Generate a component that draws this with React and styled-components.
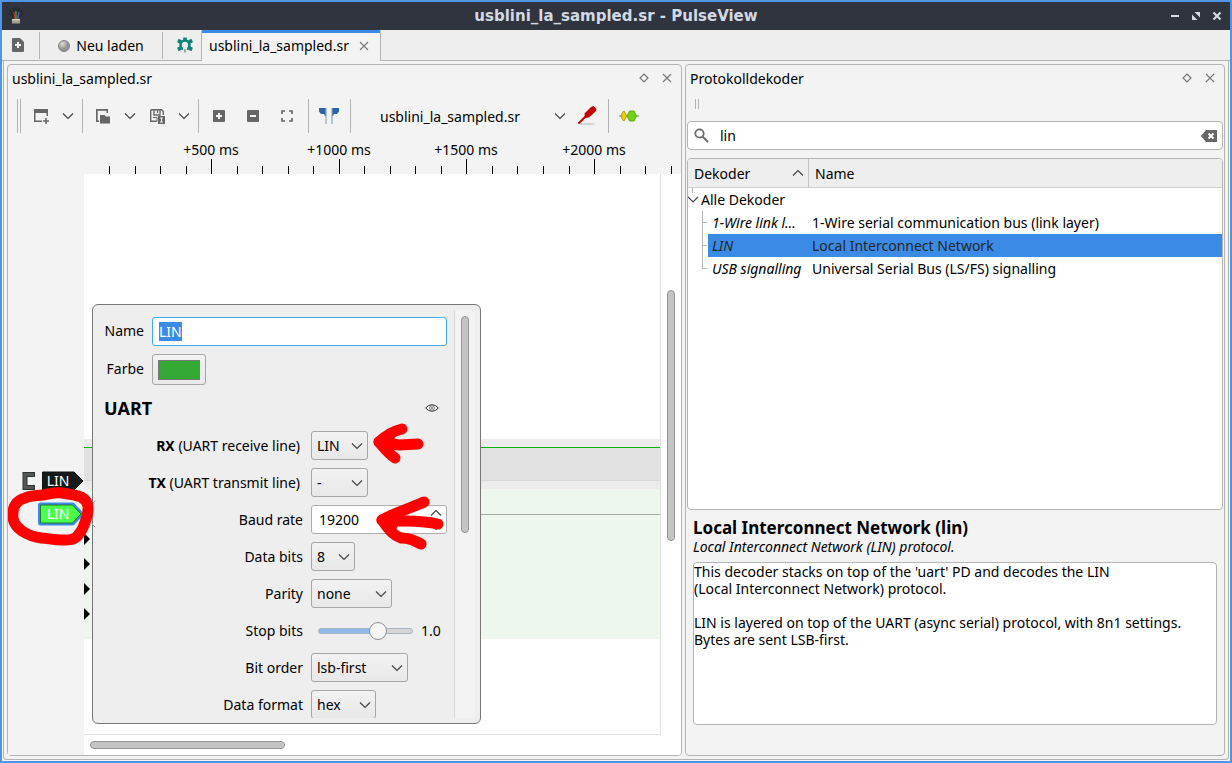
import { useEffect, useRef, useState } from "react";
import styled, { createGlobalStyle, css } from "styled-components";

const GlobalStyle = createGlobalStyle`
  * {
    box-sizing: border-box;
  }
  body {
    margin: 0;
    color: #000;
    font-family: "Noto Sans", "Open Sans", sans-serif;
    font-size: 14px;
    line-height: 17px;
  }
  button, input, select, textarea {
    margin: 0;
    font: inherit;
    color: inherit;
  }
  svg {
    display: block;
    flex: none;
  }
`;

const Window = styled.div`
  min-height: 100vh;
  display: flex;
  flex-direction: column;
  border: 2px solid #5094e4;
  background: #f3f3f3;
`;

const TitleBar = styled.header`
  height: 28px;
  display: grid;
  grid-template-columns: 90px 1fr 90px;
  align-items: center;
  background: #2f343f;
  color: #d3dae3;
`;

const WindowTitle = styled.h1`
  margin: 0;
  font-family: "DejaVu Sans", sans-serif;
  font-size: 15px;
  font-weight: bold;
  text-align: center;
`;

const WindowIcon = styled.div`
  padding-left: 6px;
`;

const WindowButtons = styled.div`
  display: flex;
  justify-content: flex-end;
  gap: 7px;
  padding-right: 6px;
`;

const IconButton = styled.button`
  width: ${(props) => props.$size || 14}px;
  height: ${(props) => props.$size || 14}px;
  padding: 0;
  display: flex;
  align-items: center;
  justify-content: center;
  border: 0;
  background: none;
`;

const TabBar = styled.div`
  height: 31px;
  display: flex;
  background: #eee;
  border-bottom: 1px solid #b4b4b4;
`;

const TabBarCell = styled.div`
  width: ${(props) => props.$width}px;
  height: 27px;
  margin-top: 2px;
  padding: ${(props) => props.$padding || 0};
  display: flex;
  align-items: center;
  justify-content: center;
  border-right: ${(props) => (props.$last ? "0" : "1px solid #b4b4b4")};
`;

const ReloadButton = styled.button`
  display: flex;
  align-items: center;
  gap: 6px;
  padding: 0;
  border: 0;
  background: none;
`;

const Tab = styled.div`
  height: 31px;
  display: flex;
  align-items: center;
  gap: 10px;
  padding: 0 11px 3px 7px;
  border: 1px solid #b4b4b4;
  border-top: 3px solid #3b8be6;
  border-bottom: 0;
  border-radius: 2px 2px 0 0;
  background: #f3f3f3;
`;

const Frame = styled.main`
  flex: 1;
  display: grid;
  grid-template-columns: minmax(0, 5fr) minmax(0, 4fr);
  gap: 3px;
  margin: 0 1px 1px;
  padding: 3px;
  border: 1px solid #b4b4b4;
  border-top: 0;
  border-radius: 0 0 4px 4px;
`;

const Dock = styled.section`
  display: flex;
  flex-direction: column;
  min-width: 0;
  border: 1px solid #b4b4b4;
  border-radius: 4px;
`;

const DockHeader = styled.div`
  height: 26px;
  display: flex;
  align-items: center;
  gap: 9px;
  padding: 0 7px 0 4px;
`;

const DockTitle = styled.h2`
  flex: 1;
  margin: 0;
  font-size: 14px;
  font-weight: normal;
`;

const Toolbar = styled.div`
  height: 34px;
  margin: 8px 0 7px;
  padding-left: 9px;
  display: flex;
  align-items: center;
`;

const Handle = styled.div`
  width: 4px;
  height: ${(props) => props.$height}px;
  border: 1px solid #b4b4b4;
  border-width: 0 1px;
`;

const ToolGroup = styled.div`
  height: 34px;
  display: flex;
  align-items: center;
  gap: ${(props) => props.$gap || 0}px;
  padding: ${(props) => props.$padding};
  border-right: ${(props) => (props.$last ? "0" : "1px solid #b4b4b4")};
`;

const ToolButton = styled.button`
  width: ${(props) => (props.$menu ? 14 : 20)}px;
  height: 24px;
  padding: 0;
  display: flex;
  align-items: center;
  justify-content: center;
  border: 0;
  background: none;
`;

const DeviceSelect = styled.div`
  width: 190px;
  display: grid;
  align-items: center;

  & > * {
    grid-area: 1 / 1;
  }
  & > svg {
    justify-self: end;
    pointer-events: none;
  }
  select {
    appearance: none;
    width: 100%;
    padding: 0 3px;
    border: 0;
    background: none;
  }
`;

const Ruler = styled.svg`
  width: 100%;
  height: 34px;
  overflow: hidden;
`;

const View = styled.div`
  position: relative;
  flex: 1;
  min-height: 560px;
  display: grid;
  grid-template-columns: 76px minmax(0, 1fr) 20px;
  grid-template-rows: minmax(0, 1fr) 20px;
  border-radius: 0 0 3px 3px;
  background: #fff;
`;

const SignalHeader = styled.div`
  grid-row: 1 / 3;
  padding-top: 295px;
  display: flex;
  flex-direction: column;
  align-items: flex-end;
  gap: 9px;
  background: #f3f3f3;
`;

const SignalRow = styled.div`
  display: flex;
  align-items: center;
  gap: 6px;
`;

const Canvas = styled.div`
  padding-top: 265px;
  border-right: 1px solid #e0e0e0;
  border-bottom: 1px solid #e0e0e0;
`;

const LogicTrack = styled.div`
  height: 50px;
  padding: 8px 0;
  background: #ececec;

  & > div {
    height: 34px;
    border-top: 1px solid #0ab40a;
    border-bottom: 1px solid #d8d8d8;
    background: #e1e1e1;
  }
`;

const DecodeTrack = styled.div`
  height: 150px;
  padding-top: 25px;
  background: #edf7ee;

  & > div {
    border-top: 1px solid #a4aca5;
    padding-top: 18px;
    display: flex;
    flex-direction: column;
    gap: 13px;
  }
`;

const VerticalBar = styled.div`
  grid-column: 3;
  grid-row: 1;
  padding: 116px 6px 0;
`;

const HorizontalBar = styled.div`
  grid-column: 2;
  grid-row: 2;
  padding: 6px;
`;

const Thumb = styled.div`
  width: ${(props) => props.$width}px;
  height: ${(props) => props.$height}px;
  border: 1px solid #969696;
  border-radius: 4px;
  background: #c4c4c4;
`;

const Popup = styled.form`
  position: absolute;
  top: 130px;
  left: 84px;
  width: 389px;
  max-height: 420px;
  padding: 5px 5px 5px 11px;
  display: flex;
  gap: 7px;
  border: 1px solid #777;
  border-radius: 6px;
  background: #eee;
`;

const PopupContent = styled.div`
  flex: 1;
  min-width: 0;
  padding-top: 7px;
  overflow: hidden;
`;

const PopupScroll = styled.div`
  width: 21px;
  padding: 6px;
  border-left: 1px solid #d9d9d9;
  background: #f3f3f3;
`;

const BasicRow = styled.div`
  display: grid;
  grid-template-columns: 40px minmax(0, 1fr);
  column-gap: 8px;
  align-items: center;
  margin-bottom: 8px;

  label {
    padding-bottom: 2px;
    text-align: right;
  }
`;

const fieldBox = css`
  height: 29px;
  border: 1px solid #adadad;
  border-radius: 3px;
`;

const NameInput = styled.input`
  ${fieldBox}
  width: 100%;
  padding: 0 6px;
  border-color: #3daee9;
  background: #fff;
  outline: 0;

  &::selection {
    background: #3b8be6;
    color: #fff;
  }
`;

const ColorButton = styled.button`
  width: 54px;
  height: 31px;
  padding: 5px;
  border: 1px solid #a6a6a6;
  border-radius: 3px;
  background: linear-gradient(#f2f2f2, #e8e8e8);

  span {
    display: block;
    height: 20px;
    border: 1px solid #777;
    background: #33a933;
  }
`;

const DecoderHeading = styled.div`
  height: 30px;
  margin-bottom: 8px;
  padding-right: 8px;
  display: flex;
  align-items: center;
  justify-content: space-between;

  h3 {
    margin: 0;
    font-size: 18px;
  }
`;

const OptionRow = styled.div`
  height: 29px;
  margin-bottom: 8px;
  display: grid;
  grid-template-columns: ${(props) => (props.$channel ? 196 : 199)}px minmax(0, 1fr);
  column-gap: ${(props) => (props.$channel ? 11 : 8)}px;
  align-items: center;

  & > label {
    text-align: right;
  }
`;

const SelectBox = styled.div`
  width: ${(props) => props.$width}px;
  display: grid;
  align-items: center;

  & > * {
    grid-area: 1 / 1;
  }
  & > svg {
    justify-self: end;
    margin-right: 4px;
    pointer-events: none;
  }
  select {
    ${fieldBox}
    appearance: none;
    width: 100%;
    padding: 0 5px;
    background: linear-gradient(#f2f2f2, #e8e8e8);
    border-color: #a6a6a6;
  }
`;

const SpinBox = styled.div`
  ${fieldBox}
  display: flex;
  background: #fff;

  input {
    flex: 1;
    min-width: 0;
    padding: 0 7px;
    border: 0;
    background: none;
    outline: 0;
  }
`;

const SpinButtons = styled.div`
  display: grid;
  grid-template-rows: 14px 13px;
`;

const SpinButton = styled.button`
  width: 20px;
  padding: 0;
  display: grid;
  place-items: center;
  border: 0;
  background: none;
`;

const SliderBox = styled.div`
  display: flex;
  align-items: center;
  gap: 8px;
  padding-left: 7px;

  input {
    appearance: none;
    width: 95px;
    height: 18px;
    background: none;
  }
  input::-webkit-slider-runnable-track {
    height: 6px;
    border: 1px solid #a9b4c2;
    border-radius: 3px;
    background: linear-gradient(
      to right,
      #8fbaea ${(props) => props.$percent}%,
      #d6d6d6 ${(props) => props.$percent}%
    );
  }
  input::-webkit-slider-thumb {
    appearance: none;
    width: 18px;
    height: 18px;
    margin-top: -7px;
    border: 1px solid #8f8f8f;
    border-radius: 9px;
    background: #f6f6f6;
  }
`;

const Annotation = styled.svg`
  position: absolute;
  top: ${(props) => props.$top}px;
  left: ${(props) => props.$left}px;
  pointer-events: none;
  fill: none;
  stroke: #f00;
  stroke-linecap: round;
  stroke-linejoin: round;
`;

const SmallHandleRow = styled.div`
  padding: 8px 0 12px 9px;
`;

const SearchField = styled.label`
  height: 29px;
  margin: 0 1px 8px;
  padding: 0 5px 0 6px;
  display: flex;
  align-items: center;
  border: 1px solid #b4b4b4;
  border-radius: 4px;
  background: #fff;

  input {
    flex: 1;
    min-width: 0;
    padding: 0 11px;
    border: 0;
    background: none;
    outline: 0;
  }
`;

const TreePane = styled.div`
  flex: 1;
  min-height: 120px;
  margin: 0 1px;
  border: 1px solid #b4b4b4;
  border-radius: 4px;
  background: #fff;
  overflow: hidden;
`;

const Tree = styled.table`
  width: 100%;
  table-layout: fixed;
  border-collapse: separate;
  border-spacing: 0;

  th {
    height: 29px;
    padding: 0 6px;
    text-align: left;
    font-weight: normal;
    background: #eee;
    border-bottom: 1px solid #cfcfcf;
  }
  th:first-child {
    width: 121px;
    padding-right: 3px;
    border-right: 1px solid #c4c4c4;
  }
  th > div {
    display: flex;
    align-items: center;
    justify-content: space-between;
  }
  td {
    height: 23px;
    padding: 0;
  }
`;

const RootCell = styled.div`
  display: flex;
  align-items: center;
`;

const NameCell = styled.div`
  height: 23px;
  padding: 3px;
  white-space: nowrap;
  color: ${(props) => (props.$selected ? "#232629" : "inherit")};
  background: ${(props) => (props.$selected ? "#3b8be6" : "none")};
`;

const DecoderCell = styled.div`
  display: flex;

  span {
    flex: 1;
    height: 23px;
    padding: 3px 4px;
    overflow: hidden;
    white-space: nowrap;
    text-overflow: ellipsis;
    font-style: italic;
    color: ${(props) => (props.$selected ? "#232629" : "inherit")};
    background: ${(props) => (props.$selected ? "#3b8be6" : "none")};
  }
`;

const Details = styled.div`
  padding: 8px 7px 30px;

  h3 {
    margin: 0;
    font-size: 17px;
    line-height: 20px;
  }
  p {
    margin: 0 0 7px;
    font-style: italic;
  }
  textarea {
    display: block;
    width: 100%;
    height: 163px;
    padding: 0;
    border: 1px solid #b4b4b4;
    border-radius: 4px;
    background: #fff;
    line-height: 17px;
    resize: none;
    outline: 0;
  }
`;

const decoders = [
  { id: "1-Wire link l…", name: "1-Wire serial communication bus (link layer)" },
  { id: "LIN", name: "Local Interconnect Network" },
  { id: "USB signalling", name: "Universal Serial Bus (LS/FS) signalling" },
];

const description = `This decoder stacks on top of the 'uart' PD and decodes the LIN
(Local Interconnect Network) protocol.

LIN is layered on top of the UART (async serial) protocol, with 8n1 settings.
Bytes are sent LSB-first.`;

function Chevron({ up }) {
  return (
    <svg width="14" height="14" viewBox="0 0 14 14" fill="none" stroke="#444" strokeWidth="1.2">
      <path d={up ? "M2 9.5 7 4.5 12 9.5" : "M2 4.5 7 9.5 12 4.5"} />
    </svg>
  );
}

function CloseIcon() {
  return (
    <svg width="10" height="10" viewBox="0 0 10 10" fill="none" stroke="#777" strokeWidth="1.1">
      <path d="M1 1 9 9M9 1 1 9" />
    </svg>
  );
}

function FloatIcon() {
  return (
    <svg width="10" height="10" viewBox="0 0 10 10" fill="none" stroke="#777" strokeWidth="1.2">
      <path d="M5 1 9 5 5 9 1 5Z" />
    </svg>
  );
}

function AppIcon() {
  return (
    <svg width="16" height="18" viewBox="0 0 16 18" fill="none">
      <path d="M2 3 6 9M5 1 7 9M8 0V8M11 1 9 9M14 3 10 9M1 6 6 11M15 6 10 11" stroke="#1a1c20" />
      <path d="M6 5 7 13" stroke="#a33a2c" strokeWidth="1.5" />
      <path d="M8 4V13" stroke="#3a9a50" strokeWidth="1.5" />
      <path d="M11 5 9.500 13" stroke="#7d4db0" strokeWidth="1.5" />
      <path d="M4 12H12V16.500H4Z" fill="#a39f8e" />
      <path d="M4 12H12V13.500H4Z" fill="#d0ccb8" />
    </svg>
  );
}

function NewViewIcon() {
  return (
    <svg width="16" height="16" viewBox="0 0 16 16" fill="none" stroke="#666">
      <path d="M1 1H15V5H1Z" fill="#666" stroke="none" />
      <path d="M1.750 4V13.250H9M14.250 4V8" strokeWidth="1.5" />
      <path d="M13 10V16M10 13H16" strokeWidth="1.5" />
    </svg>
  );
}

function OpenIcon() {
  return (
    <svg width="16" height="16" viewBox="0 0 16 16">
      <path d="M1 1H13V5H11.500V2.700H2.700V12.500H4V14H1Z" fill="#666" />
      <path d="M5 7H9.500L11 8.500H15V15.500H5Z" fill="#666" />
    </svg>
  );
}

function SaveIcon() {
  return (
    <svg width="16" height="16" viewBox="0 0 16 16" fill="none" stroke="#666">
      <path d="M1.700 1.700H12.500L14.300 3.500V7M1.700 1.700V13.300H8" strokeWidth="1.4" />
      <path d="M5 2V7H11V2M8.500 2V5" strokeWidth="1.3" />
      <path d="M4 9.500H8V13" />
      <path d="M9 8H16V16H9Z" fill="#666" stroke="none" />
      <path d="M11 10H14M12.500 10V14M11 14H14" stroke="#f3f3f3" />
    </svg>
  );
}

function ZoomIcon({ minus }) {
  return (
    <svg width="12" height="12" viewBox="0 0 12 12">
      <rect width="12" height="12" rx="1" fill="#666" />
      <path d={minus ? "M3 6H9" : "M3 6H9M6 3V9"} stroke="#f6f6f6" strokeWidth="2" />
    </svg>
  );
}

function FitIcon() {
  return (
    <svg width="12" height="12" viewBox="0 0 12 12" fill="none" stroke="#666" strokeWidth="1.7">
      <path d="M1 4V1H4M8 1H11V4M11 8V11H8M4 11H1V8" />
    </svg>
  );
}

function FlagsIcon() {
  return (
    <svg width="20" height="18" viewBox="0 0 20 18">
      <path d="M0 1H7V9H6L5 7H2L0 4.500Z" fill="#2d64a8" />
      <path d="M20 1H13V9H14L15 7H18L20 4.500Z" fill="#2d64a8" />
      <path d="M7 1V17M13 1V17" stroke="#88a9bd" strokeWidth="1.2" />
    </svg>
  );
}

function ProbeIcon() {
  return (
    <svg width="20" height="20" viewBox="0 0 20 20">
      <ellipse cx="10" cy="18" rx="8" ry="1.300" fill="#d4d4d4" />
      <path d="M2 17 9 10" stroke="#c00" strokeWidth="2" strokeLinecap="round" />
      <path d="M7.500 7.500 14 1 16.500 0 19.500 3 18.500 5.500 12 11.500 8 12Z" fill="#c80000" />
    </svg>
  );
}

function DecoderIcon() {
  return (
    <svg width="20" height="12" viewBox="0 0 20 12">
      <path d="M0 6H20" stroke="#777" />
      <path d="M2 6 4 1.500H5.500L7.500 6 5.500 10.500H4Z" fill="#edd400" stroke="#b39b00" />
      <path d="M8 6 10.500 1H15L17.500 6 15 11H10.500Z" fill="#73d216" stroke="#5aac10" />
    </svg>
  );
}

function NewFileIcon() {
  return (
    <svg width="14" height="14" viewBox="0 0 14 14">
      <path d="M1 1Q1 0 2 0H9L13 4V13Q13 14 12 14H2Q1 14 1 13Z" fill="#666" />
      <path d="M4 7H10M7 4V10" stroke="#f6f6f6" strokeWidth="2" />
    </svg>
  );
}

function SphereIcon() {
  return (
    <svg width="12" height="12" viewBox="0 0 12 12">
      <defs>
        <radialGradient id="sphere" cx="35%" cy="30%">
          <stop offset="0" stopColor="#dcdcd6" />
          <stop offset="1" stopColor="#92928e" />
        </radialGradient>
      </defs>
      <circle cx="6" cy="6" r="5.500" fill="url(#sphere)" stroke="#858585" />
    </svg>
  );
}

function GearIcon() {
  return (
    <svg width="16" height="16" viewBox="0 0 16 16" fill="none">
      <circle cx="8" cy="8" r="4.500" stroke="#0b8577" strokeWidth="2.600" />
      <path
        d="M8 4V.5M4 5 .8 3.500M12 5 15.200 3.500M4 11 .8 12.500M12 11 15.200 12.500"
        stroke="#0b8577"
        strokeWidth="3.600"
      />
      <path d="M8 10.500V15" stroke="#eee" strokeWidth="4" />
      <path d="M8 12V15.500" stroke="#888" strokeWidth="1.500" />
    </svg>
  );
}

function EyeIcon() {
  return (
    <svg width="14" height="8" viewBox="0 0 14 8" fill="none" stroke="#333">
      <path d="M.5 4Q3.500.7 7 .7T13.500 4Q10.500 7.300 7 7.300T.5 4Z" />
      <circle cx="7" cy="4" r="2.300" stroke="#777" />
      <circle cx="7" cy="4" r=".8" fill="#333" stroke="none" />
    </svg>
  );
}

function SearchIcon() {
  return (
    <svg width="15" height="15" viewBox="0 0 15 15" fill="none" stroke="#6a6a6a">
      <circle cx="5.500" cy="5.500" r="4.200" strokeWidth="1.800" />
      <path d="M8.500 8.500 14 14" strokeWidth="2" />
    </svg>
  );
}

function ClearIcon() {
  return (
    <svg width="16" height="12" viewBox="0 0 16 12">
      <path d="M0 6 5 0H16V12H5Z" fill="#666" />
      <path d="M7.500 3.500 12.500 8.500M12.500 3.500 7.500 8.500" stroke="#fff" strokeWidth="2" />
    </svg>
  );
}

function BracketIcon() {
  return (
    <svg width="14" height="18" viewBox="0 0 14 18" fill="none">
      <path d="M13 2.500H3V15.500H13" stroke="#2e3436" strokeWidth="5" />
      <path d="M12 2.500H3V15.500H12" stroke="#555753" strokeWidth="3" />
    </svg>
  );
}

function SignalTag({ label, selected }) {
  return (
    <svg width={selected ? 46 : 42} height="24" viewBox={selected ? "0 0 46 24" : "4 0 42 24"}>
      {selected && (
        <path
          d="M2.500 3H34.500L43 12 34.500 21H2.500Z"
          stroke="#3b8be6"
          strokeWidth="5"
          strokeLinejoin="round"
        />
      )}
      <path
        d={selected ? "M2.500 3H34.500L43 12 34.500 21H2.500Z" : "M4.500 3H36L45 12 36 21H4.500Z"}
        fill={selected ? "#4bff4b" : "#16191a"}
        stroke={selected ? "#1c7a2a" : "#111"}
      />
      <text x="20" y="17" fontSize="14" fill="#fff" textAnchor="middle">
        {label}
      </text>
    </svg>
  );
}

function TimeRuler() {
  const ticks = Array.from({ length: 23 }, (_, i) => ({
    x: Math.round(101 + i * 25.53),
    major: i % 5 === 4,
    time: (i + 1) * 100,
  }));
  return (
    <Ruler>
      {ticks.map(({ x, major, time }) => (
        <g key={time}>
          <rect x={x} y={major ? 19 : 26} width="1" height={major ? 15 : 8} />
          {major && (
            <text x={x} y="15" fontSize="14" textAnchor="middle">{`+${time} ms`}</text>
          )}
        </g>
      ))}
    </Ruler>
  );
}

function Option({ id, label, channel, children }) {
  return (
    <OptionRow $channel={channel}>
      <label htmlFor={id}>
        {channel && <b>{channel} </b>}
        {label}
      </label>
      {children}
    </OptionRow>
  );
}

function Dropdown({ id, width, value }) {
  return (
    <SelectBox $width={width}>
      <select id={id} defaultValue={value}>
        <option>{value}</option>
      </select>
      <Chevron />
    </SelectBox>
  );
}

function DecoderPopup() {
  const nameRef = useRef(null);
  const [stopBits, setStopBits] = useState(1);

  useEffect(() => {
    nameRef.current.focus();
    nameRef.current.select();
  }, []);

  return (
    <Popup>
      <PopupContent>
        <BasicRow>
          <label htmlFor="name">Name</label>
          <NameInput id="name" ref={nameRef} defaultValue="LIN" />
        </BasicRow>
        <BasicRow>
          <label htmlFor="color">Farbe</label>
          <ColorButton id="color" type="button">
            <span />
          </ColorButton>
        </BasicRow>
        <DecoderHeading>
          <h3>UART</h3>
          <IconButton type="button" aria-label="Toggle visibility">
            <EyeIcon />
          </IconButton>
        </DecoderHeading>
        <Option id="rx" channel="RX" label="(UART receive line)">
          <Dropdown id="rx" width={57} value="LIN" />
        </Option>
        <Option id="tx" channel="TX" label="(UART transmit line)">
          <Dropdown id="tx" width={57} value="-" />
        </Option>
        <Option id="baud" label="Baud rate">
          <SpinBox>
            <input id="baud" type="text" inputMode="numeric" defaultValue="19200" />
            <SpinButtons>
              <SpinButton type="button" aria-label="Increase">
                <Chevron up />
              </SpinButton>
              <SpinButton type="button" aria-label="Decrease">
                <Chevron />
              </SpinButton>
            </SpinButtons>
          </SpinBox>
        </Option>
        <Option id="databits" label="Data bits">
          <Dropdown id="databits" width={44} value="8" />
        </Option>
        <Option id="parity" label="Parity">
          <Dropdown id="parity" width={81} value="none" />
        </Option>
        <Option id="stopbits" label="Stop bits">
          <SliderBox $percent={(stopBits / 1.5) * 100}>
            <input
              id="stopbits"
              type="range"
              min="0"
              max="1.5"
              step="0.5"
              value={stopBits}
              onChange={(e) => setStopBits(Number(e.target.value))}
            />
            <output htmlFor="stopbits">{stopBits.toFixed(1)}</output>
          </SliderBox>
        </Option>
        <Option id="bitorder" label="Bit order">
          <Dropdown id="bitorder" width={97} value="lsb-first" />
        </Option>
        <Option id="format" label="Data format">
          <Dropdown id="format" width={65} value="hex" />
        </Option>
      </PopupContent>
      <PopupScroll>
        <Thumb $width={8} $height={217} />
      </PopupScroll>
    </Popup>
  );
}

function SessionDock() {
  return (
    <Dock>
      <DockHeader>
        <DockTitle>usblini_la_sampled.sr</DockTitle>
        <IconButton aria-label="Float">
          <FloatIcon />
        </IconButton>
        <IconButton aria-label="Close">
          <CloseIcon />
        </IconButton>
      </DockHeader>
      <Toolbar>
        <Handle $height={34} />
        <ToolGroup $gap={10} $padding="0 7px 0 10px">
          <ToolButton aria-label="New view">
            <NewViewIcon />
          </ToolButton>
          <ToolButton $menu aria-label="New view menu">
            <Chevron />
          </ToolButton>
        </ToolGroup>
        <ToolGroup $gap={10} $padding="0 7px 0 10px">
          <ToolButton aria-label="Open">
            <OpenIcon />
          </ToolButton>
          <ToolButton $menu aria-label="Open menu">
            <Chevron />
          </ToolButton>
          <ToolButton aria-label="Save">
            <SaveIcon />
          </ToolButton>
          <ToolButton $menu aria-label="Save menu">
            <Chevron />
          </ToolButton>
        </ToolGroup>
        <ToolGroup $gap={14} $padding="0 11px 0 10px">
          <ToolButton aria-label="Zoom in">
            <ZoomIcon />
          </ToolButton>
          <ToolButton aria-label="Zoom out">
            <ZoomIcon minus />
          </ToolButton>
          <ToolButton aria-label="Zoom to fit">
            <FitIcon />
          </ToolButton>
        </ToolGroup>
        <ToolGroup $padding="0 11px 0 10px">
          <ToolButton aria-label="Show cursors">
            <FlagsIcon />
          </ToolButton>
        </ToolGroup>
        <ToolGroup $gap={10} $padding="0 11px 0 26px">
          <DeviceSelect>
            <select aria-label="Device" defaultValue="usblini_la_sampled.sr">
              <option>usblini_la_sampled.sr</option>
            </select>
            <Chevron />
          </DeviceSelect>
          <ToolButton aria-label="Configure channels">
            <ProbeIcon />
          </ToolButton>
        </ToolGroup>
        <ToolGroup $last $padding="0 0 0 10px">
          <ToolButton aria-label="Add protocol decoder">
            <DecoderIcon />
          </ToolButton>
        </ToolGroup>
      </Toolbar>
      <TimeRuler />
      <View>
        <SignalHeader>
          <SignalRow>
            <BracketIcon />
            <SignalTag label="LIN" />
          </SignalRow>
          <SignalRow>
            <SignalTag label="LIN" selected />
          </SignalRow>
        </SignalHeader>
        <Canvas>
          <LogicTrack>
            <div />
          </LogicTrack>
          <DecodeTrack>
            <div>
              {["bits", "data", "warnings", "frames"].map((row) => (
                <svg key={row} width="6" height="12" viewBox="0 0 6 12">
                  <path d="M0 0 6 6 0 12Z" />
                </svg>
              ))}
            </div>
          </DecodeTrack>
        </Canvas>
        <VerticalBar>
          <Thumb $width={8} $height={251} />
        </VerticalBar>
        <HorizontalBar>
          <Thumb $width={195} $height={8} />
        </HorizontalBar>
        <DecoderPopup />
        <Annotation $top={308} $left={0} width="92" height="72" viewBox="8 482 92 72">
          <path d="M92 504 95 501M92 524 95 527" stroke="#999" strokeWidth="1" />
          <path
            d="M25 498C31 495 37 496 43 495 50 494 55 492 62 493 69 494 76 495 81 497 89 501 89 508 87 516 85 523 83 530 79 534 75 540 70 540 62 540 53 540 47 538 41 538 34 537 28 535 22 531 15 526 12 521 13 513 13 505 18 500 25 498Z"
            strokeWidth="11"
          />
        </Annotation>
        <Annotation $top={246} $left={362} width="60" height="48" viewBox="370 420 60 48">
          <path d="M402 429C394 431 387 434 379 442 385 449 389 454 395 458" strokeWidth="11" />
          <path d="M379 442 399 445 418 444" strokeWidth="11" />
          <path d="M380 442 393 436 390 451Z" fill="#f00" strokeWidth="4" />
        </Annotation>
        <Annotation $top={320} $left={366} width="80" height="60" viewBox="374 494 80 60">
          <path
            d="M424 502C414 507 398 511 382 520 388 528 392 535 401 538 409 538 413 540 421 544"
            strokeWidth="11"
          />
          <path d="M382 520C402 522 420 520 438 524" strokeWidth="11" />
          <path d="M383 520 400 513 394 530Z" fill="#f00" strokeWidth="4" />
        </Annotation>
      </View>
    </Dock>
  );
}

function DecoderDock() {
  const [selected, setSelected] = useState("LIN");
  return (
    <Dock>
      <DockHeader>
        <DockTitle>Protokolldekoder</DockTitle>
        <IconButton aria-label="Float">
          <FloatIcon />
        </IconButton>
        <IconButton aria-label="Close">
          <CloseIcon />
        </IconButton>
      </DockHeader>
      <SmallHandleRow>
        <Handle $height={10} />
      </SmallHandleRow>
      <SearchField>
        <SearchIcon />
        <input aria-label="Search decoders" defaultValue="lin" />
        <IconButton aria-label="Clear" $size={16}>
          <ClearIcon />
        </IconButton>
      </SearchField>
      <TreePane>
        <Tree>
          <thead>
            <tr>
              <th>
                <div>
                  Dekoder
                  <Chevron up />
                </div>
              </th>
              <th>Name</th>
            </tr>
          </thead>
          <tbody>
            <tr>
              <td colSpan={2}>
                <RootCell>
                  <svg width="13" height="23" viewBox="0 0 13 23" fill="none">
                    <path d="M4.500 0V5" stroke="#b4b4b4" />
                    <path d="M0 9 5 14 10 9" stroke="#444" strokeWidth="1.200" />
                  </svg>
                  Alle Dekoder
                </RootCell>
              </td>
            </tr>
            {decoders.map(({ id, name }, index) => (
              <tr key={id} onClick={() => setSelected(id)}>
                <td>
                  <DecoderCell $selected={id === selected}>
                    <svg width="20" height="23" viewBox="0 0 20 23" fill="none" stroke="#b4b4b4">
                      <path
                        d={
                          index === decoders.length - 1
                            ? "M14.500 0V11.500H19"
                            : "M14.500 0V23M14.500 11.500H19"
                        }
                      />
                    </svg>
                    <span>{id}</span>
                  </DecoderCell>
                </td>
                <td>
                  <NameCell $selected={id === selected}>{name}</NameCell>
                </td>
              </tr>
            ))}
          </tbody>
        </Tree>
      </TreePane>
      <Details>
        <h3>Local Interconnect Network (lin)</h3>
        <p>Local Interconnect Network (LIN) protocol.</p>
        <textarea aria-label="Decoder description" readOnly value={description} />
      </Details>
    </Dock>
  );
}

function App() {
  return (
    <Window>
      <GlobalStyle />
      <TitleBar>
        <WindowIcon>
          <AppIcon />
        </WindowIcon>
        <WindowTitle>usblini_la_sampled.sr - PulseView</WindowTitle>
        <WindowButtons>
          <IconButton aria-label="Minimize">
            <svg width="10" height="10" viewBox="0 0 10 10" stroke="#d3dae3" strokeWidth="2">
              <path d="M1 5H9" />
            </svg>
          </IconButton>
          <IconButton aria-label="Maximize">
            <svg width="10" height="10" viewBox="0 0 10 10" fill="#d3dae3">
              <path d="M3.500 1H9V6.500ZM1 3.500V9H6.500Z" />
            </svg>
          </IconButton>
          <IconButton aria-label="Close window">
            <svg width="10" height="10" viewBox="0 0 10 10" stroke="#d3dae3" strokeWidth="2.200">
              <path d="M1.500 1.500 8.500 8.500M8.500 1.500 1.500 8.500" />
            </svg>
          </IconButton>
        </WindowButtons>
      </TitleBar>
      <TabBar>
        <TabBarCell $width={38} $padding="0 5px 2px 0">
          <IconButton aria-label="New session">
            <NewFileIcon />
          </IconButton>
        </TabBarCell>
        <TabBarCell $width={123}>
          <ReloadButton>
            <SphereIcon />
            Neu laden
          </ReloadButton>
        </TabBarCell>
        <TabBarCell $width={38} $padding="0 0 2px 5px" $last>
          <IconButton aria-label="Settings" $size={16}>
            <GearIcon />
          </IconButton>
        </TabBarCell>
        <Tab>
          usblini_la_sampled.sr
          <IconButton aria-label="Close tab" $size={10}>
            <CloseIcon />
          </IconButton>
        </Tab>
      </TabBar>
      <Frame>
        <SessionDock />
        <DecoderDock />
      </Frame>
    </Window>
  );
}

export default App;
